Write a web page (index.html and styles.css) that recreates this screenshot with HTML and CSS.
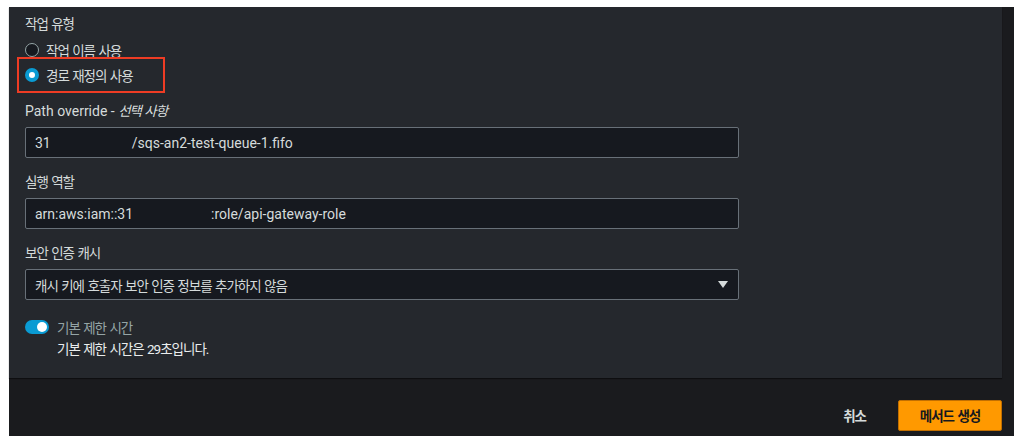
FILE: index.html
```html
<!DOCTYPE html>
<html lang="ko">

<head>
  <meta charset="UTF-8">
  <meta name="viewport" content="width=device-width, initial-scale=1.0">
  <title>메서드 생성</title>

  <link rel="stylesheet" href="styles.css">
</head>

<body>
  <div class="console">
    <div class="panel">
      <div class="form">
        <div class="group">
          <div class="label">작업 유형</div>
          <label class="radio">
            <span class="radio_dot"></span>
            <span>작업 이름 사용</span>
          </label>
          <label class="radio checked marked">
            <span class="radio_dot"></span>
            <span>경로 재정의 사용</span>
          </label>
        </div>

        <div class="field">
          <div class="label"><span class="en">Path override - </span><i>선택 사항</i></div>
          <div class="input en">31<span class="hidden_id short"></span>/sqs-an2-test-queue-1.fifo</div>
        </div>

        <div class="field">
          <div class="label">실행 역할</div>
          <div class="input en">arn:aws:iam::31<span class="hidden_id long"></span>:role/api-gateway-role</div>
        </div>

        <div class="field">
          <div class="label">보안 인증 캐시</div>
          <div class="input select">
            <span>캐시 키에 호출자 보안 인증 정보를 추가하지 않음</span>
            <span class="caret"></span>
          </div>
        </div>

        <div class="timeout">
          <div class="toggle_row">
            <span class="toggle"><span class="knob"></span></span>
            <span class="toggle_label">기본 제한 시간</span>
          </div>
          <div class="timeout_desc">기본 제한 시간은 29초입니다.</div>
        </div>
      </div>
    </div>

    <div class="footer">
      <button class="btn_link">취소</button>
      <button class="btn_primary">메서드 생성</button>
    </div>
  </div>
</body>

</html>
```

FILE: styles.css
```css
* {
  box-sizing: border-box;
  margin: 0;
  padding: 0;
}

/* korean text is set a little tighter, latin runs go back to 14px */
body {
  background-color: #ffffff;
  font-family: Roboto, "Noto Sans CJK KR", sans-serif;
  font-size: 13.5px;
  height: 100vh;
  letter-spacing: -1px;
  overflow: hidden;
  word-spacing: 1px;
}

.en {
  font-size: 14px;
  letter-spacing: 0;
  word-spacing: 0;
}

.console {
  background-color: #1a1b1e;
  margin: 7px 10px 0 9px;
}

.panel {
  background-color: #25282d;
  box-shadow: 0 1px 1px rgba(0, 0, 0, 0.45);
  height: 371px;
  margin-right: 12px;
  padding: 7px 16px 0;
}

.form {
  display: flex;
  flex-direction: column;
  width: 714px;
}

.label {
  color: #d5dbdb;
  line-height: 20px;
}

.label i {
  font-style: italic;
}

.group {
  display: flex;
  flex-direction: column;
  margin-bottom: 14px;
}

.group .label {
  margin-bottom: 3px;
}

.radio {
  align-items: center;
  color: #d5dbdb;
  display: flex;
  gap: 7px;
  height: 25px;
  position: relative;
  width: max-content;
}

.radio_dot {
  background-color: #16191f;
  border: 1.5px solid #95a5a6;
  border-radius: 50%;
  height: 14px;
  width: 14px;
}

.radio.checked .radio_dot {
  background-color: #ffffff;
  border: 4px solid #0a9bd3;
}

/* red annotation box */
.radio.marked::after {
  border: 2px solid #ee3c24;
  content: "";
  height: 32px;
  left: -8px;
  position: absolute;
  top: -5px;
  width: 144px;
}

.field {
  display: flex;
  flex-direction: column;
  gap: 6px;
  margin-bottom: 14px;
}

.input {
  align-items: center;
  background-color: #16191f;
  border: 1px solid #687078;
  border-radius: 2px;
  color: #d5dbdb;
  display: flex;
  height: 31px;
  padding: 0 9px;
  white-space: nowrap;
}

.hidden_id {
  display: inline-block;
}

.hidden_id.short {
  width: 81px;
}

.hidden_id.long {
  width: 78px;
}

.select {
  justify-content: space-between;
}

.caret {
  border-left: 5px solid transparent;
  border-right: 5px solid transparent;
  border-top: 7px solid #d5dbdb;
  margin-right: 1px;
}

.timeout {
  margin-top: 3px;
}

.toggle_row {
  align-items: center;
  display: flex;
  gap: 8px;
  height: 20px;
}

.toggle {
  align-items: center;
  background-color: #0a9bd3;
  border-radius: 7px;
  display: flex;
  height: 14px;
  justify-content: flex-end;
  padding: 0 2px;
  width: 24px;
}

.knob {
  background-color: #ffffff;
  border-radius: 50%;
  height: 10px;
  width: 10px;
}

.toggle_label {
  color: #95a5a6;
}

.timeout_desc {
  color: #eaeded;
  line-height: 20px;
  margin-top: 2px;
  padding-left: 32px;
}

.footer {
  align-items: center;
  display: flex;
  height: 58px;
  justify-content: flex-end;
  padding: 16px 12px 0 0;
}

.footer button {
  font-family: inherit;
  font-size: 13.5px;
  font-weight: bold;
  height: 31px;
  letter-spacing: -1px;
  word-spacing: 1px;
}

.btn_link {
  background: none;
  border: none;
  color: #d5dbdb;
  margin-right: 16px;
  padding: 0 16px;
}

.btn_primary {
  background-color: #ff9900;
  border: 1px solid #c26f00;
  border-radius: 2px;
  color: #16191f;
  width: 104px;
}
```
